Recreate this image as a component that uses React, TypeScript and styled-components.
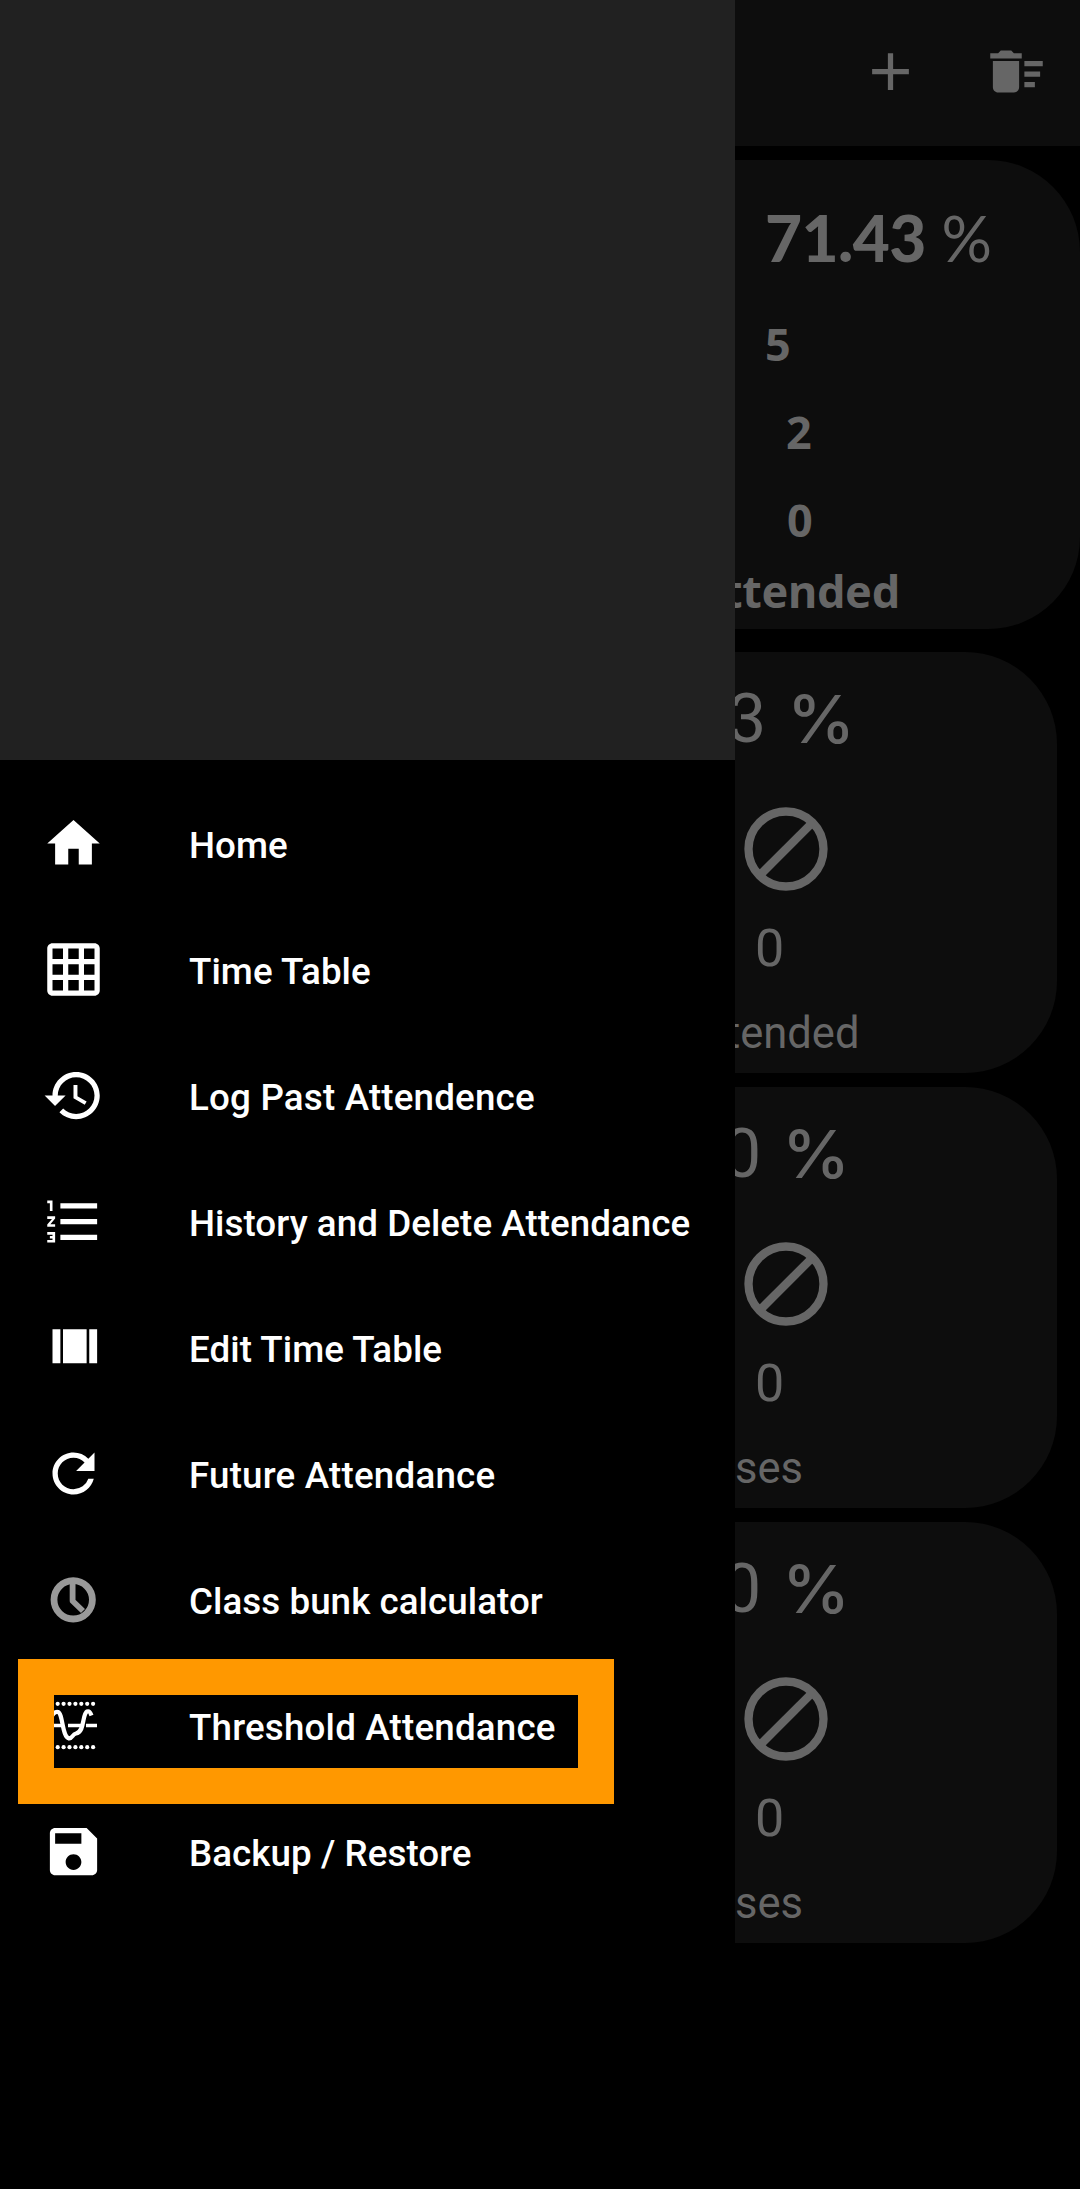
import React from "react";
import styled, { createGlobalStyle } from "styled-components";
import {
  MdAdd,
  MdDeleteSweep,
  MdFormatListNumbered,
  MdGridOn,
  MdRefresh,
} from "react-icons/md";

const GlobalStyle = createGlobalStyle`
  body {
    margin: 0;
    background: #000;
    font-family: Roboto, "Liberation Sans", sans-serif;
  }
`;

const Screen = styled.div`
  position: relative;
  display: grid;
  grid-template-columns: 735px 345px;
  width: 1080px;
  height: 2189px;
  overflow: hidden;
  background: #000;
`;

const Drawer = styled.nav`
  background: #000;
`;

const DrawerHeader = styled.div`
  height: 760px;
  background: #212121;
`;

const Menu = styled.ul`
  margin: 0;
  padding: 21px 0 0;
  list-style: none;
`;

const MenuItem = styled.li`
  position: relative;
  display: flex;
  align-items: center;
  gap: 84px;
  height: 126px;
  padding-left: 42px;
  color: #fff;
`;

const MenuIcon = styled.span`
  display: flex;
  flex: none;
  width: 63px;
  height: 63px;
  margin-bottom: 1px;

  svg {
    width: 63px;
    height: 63px;
  }
`;

const MenuLabel = styled.span<{ $tracking?: number }>`
  padding-top: 4px;
  font-size: 36.75px;
  font-weight: 500;
  letter-spacing: ${(p) => p.$tracking ?? 0.05}px;
  line-height: 44px;
  white-space: nowrap;
`;

const Highlight = styled.span`
  position: absolute;
  top: -4px;
  left: 17.5px;
  box-sizing: border-box;
  width: 596px;
  height: 145px;
  border: 36.5px solid #ff9800;
`;

const Page = styled.main`
  overflow: hidden;
  color: #666;
`;

const Toolbar = styled.header`
  display: flex;
  justify-content: flex-end;
  box-sizing: border-box;
  height: 146px;
  padding: 8px 1px 0 0;
  background: #0d0d0d;
`;

const ToolButton = styled.span`
  display: flex;
  align-items: center;
  justify-content: center;
  width: 126px;
  height: 127px;

  svg {
    width: 63px;
    height: 63px;
  }
`;

const SummaryCard = styled.section`
  box-sizing: border-box;
  height: 469px;
  margin-top: 14px;
  padding-top: 37.5px;
  border-radius: 0 92px 92px 0;
  background: #0d0d0d;
`;

const CardList = styled.div`
  display: flex;
  flex-direction: column;
  gap: 14px;
  padding: 23px 23px 0 0;
`;

const Card = styled.section`
  box-sizing: border-box;
  height: 421px;
  padding-top: 31px;
  border-radius: 0 92px 92px 0;
  background: #0d0d0d;
`;

const SummaryPercent = styled.div`
  display: flex;
  height: 80px;
  margin: 0 0 22px 30px;
  font-family: Lato, sans-serif;
  font-size: 64px;
  line-height: 80px;
  white-space: nowrap;
`;

const SummaryValue = styled.span`
  width: 176.5px;
  font-weight: 900;
  letter-spacing: -0.6px;
`;

const ThinPercent = styled.span`
  font-size: 63px;
  font-weight: 400;
`;

const SummaryStat = styled.div<{ $indent: number }>`
  height: 88px;
  padding-left: ${(p) => p.$indent}px;
  font-family: "Noto Sans", sans-serif;
  font-size: 45px;
  font-weight: 700;
  line-height: 88px;
`;

const SummaryNote = styled.div`
  height: 51px;
  margin: 1.5px 0 0 -12px;
  font-family: "Noto Sans", sans-serif;
  font-size: 45px;
  font-weight: 700;
  letter-spacing: -0.3px;
  line-height: 51px;
  white-space: nowrap;
`;

const CardPercent = styled.div<{ $shift: number }>`
  display: flex;
  height: 72px;
  margin-left: ${(p) => p.$shift}px;
  font-size: 68px;
  line-height: 72px;
`;

const CardDigit = styled.span`
  width: 59px;
`;

const RoundPercent = styled.span`
  font-family: Inter, sans-serif;
  font-size: 66px;
  font-weight: 500;
  transform: scaleX(1.04);
  transform-origin: left;
`;

const BlockIcon = styled.div`
  height: 100px;
  margin: 43.5px 0 17.5px 0.5px;

  svg {
    display: block;
    width: 100px;
    height: 100px;
  }
`;

const CardCount = styled.div`
  height: 63px;
  padding: 1px 0 0 20px;
  font-size: 52px;
  line-height: 64px;
`;

const CardNote = styled.div<{ $shift: number }>`
  height: 60px;
  margin: 23.5px 0 0 ${(p) => p.$shift}px;
  font-size: 43.5px;
  line-height: 60px;
`;

const HomeGlyph = () => (
  <svg viewBox="0 0 24 24" fill="currentColor">
    <path d="M10 20v-6h4v6h5v-8h3L12 3 2 12h3v8z" />
  </svg>
);

const HistoryGlyph = () => (
  <svg viewBox="0 0 24 24" fill="currentColor">
    <path d="M13 3c-4.97 0-9 4.03-9 9H1l3.89 3.89.07.14L9 12H6c0-3.87 3.13-7 7-7s7 3.13 7 7-3.13 7-7 7c-1.93 0-3.68-.79-4.94-2.06l-1.42 1.42C8.27 19.99 10.51 21 13 21c4.97 0 9-4.03 9-9s-4.03-9-9-9zm-1 5v5l4.28 2.54.72-1.21-3.5-2.08V8H12z" />
  </svg>
);

const ColumnsGlyph = () => (
  <svg viewBox="0 0 24 24" fill="currentColor">
    <path d="M4 18h3V5H4v13zM18 5v13h3V5h-3zM8 18h9V5H8v13z" />
  </svg>
);

const ClockGlyph = () => (
  <svg viewBox="0 0 63 63" fill="none" stroke="#999">
    <circle cx="31.2" cy="31.8" r="19.2" strokeWidth="6.8" />
    <path d="M30.6 16V33L41 43" strokeWidth="5.8" strokeLinejoin="round" />
  </svg>
);

const dotColumns = [0, 1, 2, 3, 4, 5, 6];

const ThresholdGlyph = () => (
  <svg viewBox="0 0 63 63" fill="none" stroke="currentColor">
    {dotColumns.map((i) => (
      <g key={i} fill="currentColor" stroke="none">
        <circle cx={15.7 + i * 5.9} cy="9.8" r="2.1" />
        <circle cx={15.7 + i * 5.9} cy="53.2" r="2.1" />
      </g>
    ))}
    <path d="M8 31.500H22M26 31.500H39.500M44 31.500H55" strokeWidth="3.6" />
    <path
      d="M9 24C11 19 13.500 17.600 16 18C21 19.500 20 43 27 44.500C31 44 30 40.500 34 39.500C43 38 40 20 45 17.500C48 16.500 48.500 19 49.500 21.500"
      strokeWidth="4.2"
    />
  </svg>
);

const SaveGlyph = () => (
  <svg viewBox="0 0 24 24" fill="currentColor">
    <path d="M17 3H5c-1.110 0-2 .9-2 2v14c0 1.100.890 2 2 2h14c1.100 0 2-.9 2-2V7l-4-4zm-5 16c-1.660 0-3-1.340-3-3s1.340-3 3-3 3 1.340 3 3-1.340 3-3 3zm3-10H5V5h10v4z" />
  </svg>
);

const items = [
  { label: "Home", icon: <HomeGlyph /> },
  { label: "Time Table", icon: <MdGridOn /> },
  { label: "Log Past Attendence", icon: <HistoryGlyph />, tracking: 0.18 },
  { label: "History and Delete Attendance", icon: <MdFormatListNumbered /> },
  { label: "Edit Time Table", icon: <ColumnsGlyph /> },
  { label: "Future Attendance", icon: <MdRefresh />, tracking: 0.2 },
  { label: "Class bunk calculator", icon: <ClockGlyph /> },
  {
    label: "Threshold Attendance",
    icon: <ThresholdGlyph />,
    tracking: 0.18,
    highlighted: true,
  },
  { label: "Backup / Restore", icon: <SaveGlyph /> },
];

const subjects = [
  { digit: "3", shift: -7, note: "tended", noteShift: -9 },
  { digit: "0", shift: -12, note: "ses", noteShift: 0 },
  { digit: "0", shift: -12, note: "ses", noteShift: 0 },
];

export default function App() {
  return (
    <>
      <GlobalStyle />
      <Screen>
        <Drawer>
          <DrawerHeader />
          <Menu>
            {items.map((item) => (
              <MenuItem key={item.label}>
                <MenuIcon>{item.icon}</MenuIcon>
                <MenuLabel $tracking={item.tracking}>{item.label}</MenuLabel>
                {item.highlighted && <Highlight />}
              </MenuItem>
            ))}
          </Menu>
        </Drawer>
        <Page>
          <Toolbar>
            <ToolButton>
              <MdAdd />
            </ToolButton>
            <ToolButton>
              <MdDeleteSweep />
            </ToolButton>
          </Toolbar>
          <SummaryCard>
            <SummaryPercent>
              <SummaryValue>71.43</SummaryValue>
              <ThinPercent>%</ThinPercent>
            </SummaryPercent>
            <SummaryStat $indent={30}>5</SummaryStat>
            <SummaryStat $indent={51}>2</SummaryStat>
            <SummaryStat $indent={52}>0</SummaryStat>
            <SummaryNote>ttended</SummaryNote>
          </SummaryCard>
          <CardList>
            {subjects.map((subject, i) => (
              <Card key={i}>
                <CardPercent $shift={subject.shift}>
                  <CardDigit>{subject.digit}</CardDigit>
                  <RoundPercent>%</RoundPercent>
                </CardPercent>
                <BlockIcon>
                  <svg viewBox="0 0 24 24" fill="none" stroke="currentColor" strokeWidth="2">
                    <circle cx="12" cy="12" r="9" />
                    <path d="M5.300 18.700 18.700 5.300" />
                  </svg>
                </BlockIcon>
                <CardCount>0</CardCount>
                <CardNote $shift={subject.noteShift}>{subject.note}</CardNote>
              </Card>
            ))}
          </CardList>
        </Page>
      </Screen>
    </>
  );
}
